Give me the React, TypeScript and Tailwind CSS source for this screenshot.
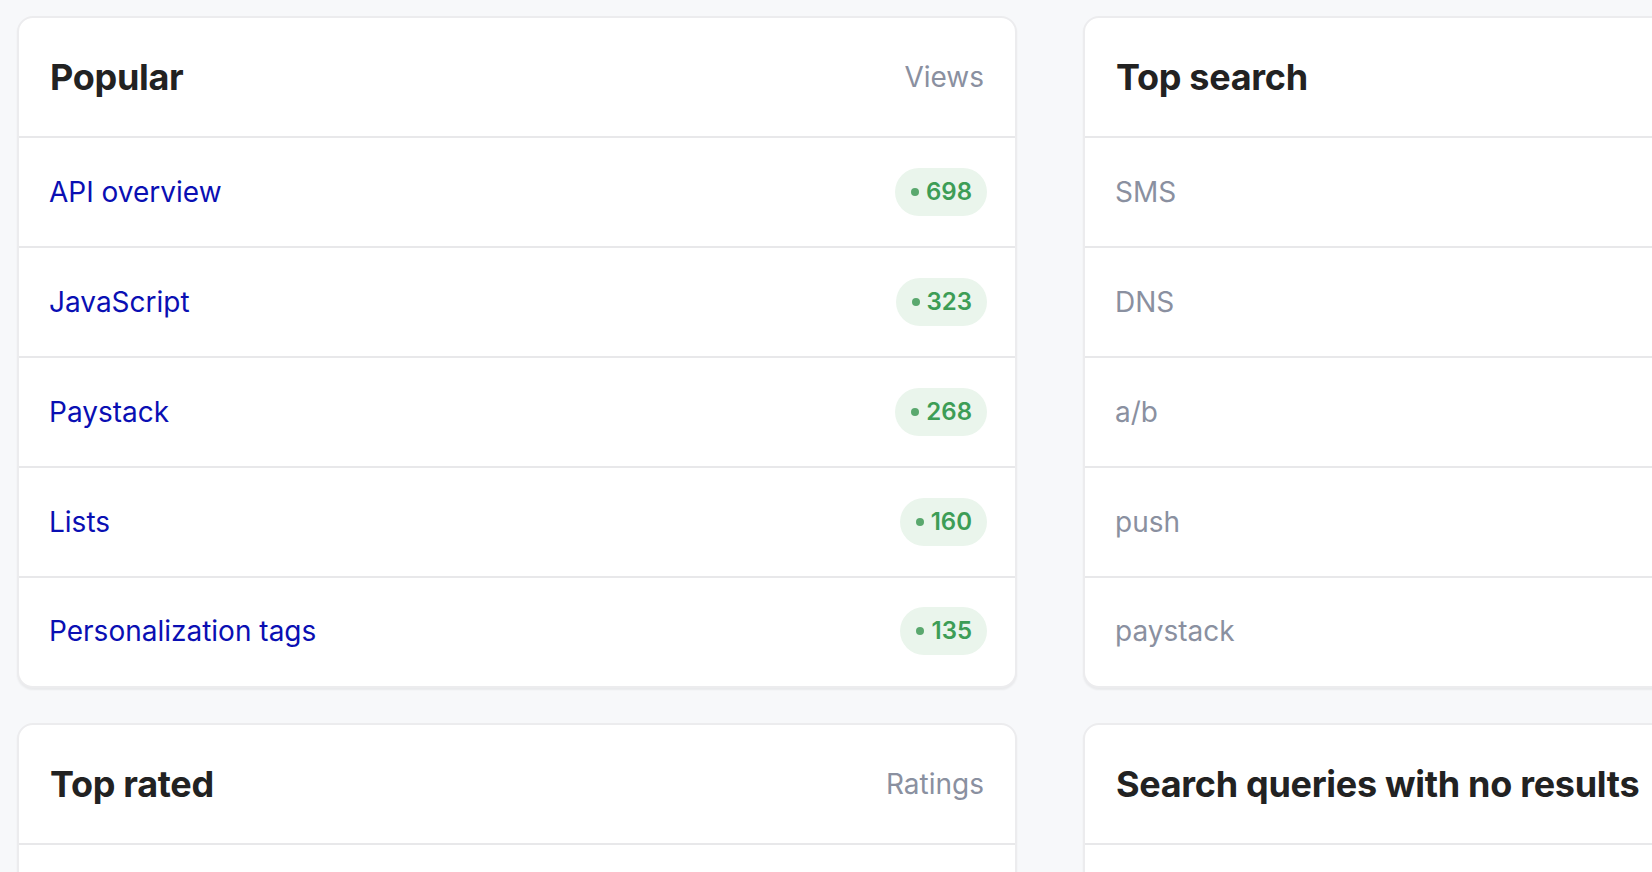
import React from 'react';

interface Row {
  label: string;
  count?: number;
}

interface PanelProps {
  title: string;
  meta?: string;
  rows: Row[];
  linked?: boolean;
}

const popular: Row[] = [
  { label: 'API overview', count: 698 },
  { label: 'JavaScript', count: 323 },
  { label: 'Paystack', count: 268 },
  { label: 'Lists', count: 160 },
  { label: 'Personalization tags', count: 135 },
];

const topSearch: Row[] = [
  { label: 'SMS' },
  { label: 'DNS' },
  { label: 'a/b' },
  { label: 'push' },
  { label: 'paystack' },
];

const topRated: Row[] = [
  { label: 'Getting started', count: 42 },
  { label: 'Webhooks', count: 31 },
];

const noResults: Row[] = [{ label: 'zapier' }, { label: 'sso' }];

function Badge({ value }: { value: number }) {
  return (
    <span className="flex h-[48px] items-center gap-[7px] rounded-full bg-[#eaf5ec] pl-[16px] pr-[15px] text-[24px] font-semibold text-[#3d9d56]">
      <span className="h-[8px] w-[8px] rounded-full bg-[#5aa86e]" />
      {value}
    </span>
  );
}

function Panel({ title, meta, rows, linked }: PanelProps) {
  return (
    <section className="overflow-hidden rounded-2xl border-2 border-[#ececee] bg-white shadow-[0_2px_2px_rgba(0,0,0,0.06)]">
      <header className="flex h-[120px] items-center justify-between border-b-2 border-[#e8e8ea] pl-[31px] pr-[31px]">
        <h2 className="whitespace-nowrap text-[36px] font-bold tracking-[-0.3px] text-[#222222]">{title}</h2>
        {meta && <span className="text-[28px] text-[#8a90a0]">{meta}</span>}
      </header>
      <ul>
        {rows.map((row, i) => {
          const last = i === rows.length - 1;
          return (
            <li
              key={row.label}
              className={`flex items-center justify-between pl-[30px] pr-[28px] ${
                last ? 'h-[108px] pb-[2px]' : 'h-[110px] border-b-2 border-[#e8e8ea]'
              }`}
            >
              <span className={`text-[28px] ${linked ? 'text-[#0a0fb3]' : 'text-[#8a90a0]'}`}>{row.label}</span>
              {row.count !== undefined && <Badge value={row.count} />}
            </li>
          );
        })}
      </ul>
    </section>
  );
}

export default function App() {
  return (
    <div className="h-screen w-full overflow-hidden bg-[#f7f8fa] font-['Inter','Noto_Sans',sans-serif]">
      <div className="grid w-max grid-cols-[1000px_1000px] items-start gap-x-[66px] gap-y-[35px] pl-[17px] pt-[16px]">
        <Panel title="Popular" meta="Views" rows={popular} linked />
        <Panel title="Top search" meta="Searches" rows={topSearch} />
        <Panel title="Top rated" meta="Ratings" rows={topRated} linked />
        <Panel title="Search queries with no results" meta="Searches" rows={noResults} />
      </div>
    </div>
  );
}
